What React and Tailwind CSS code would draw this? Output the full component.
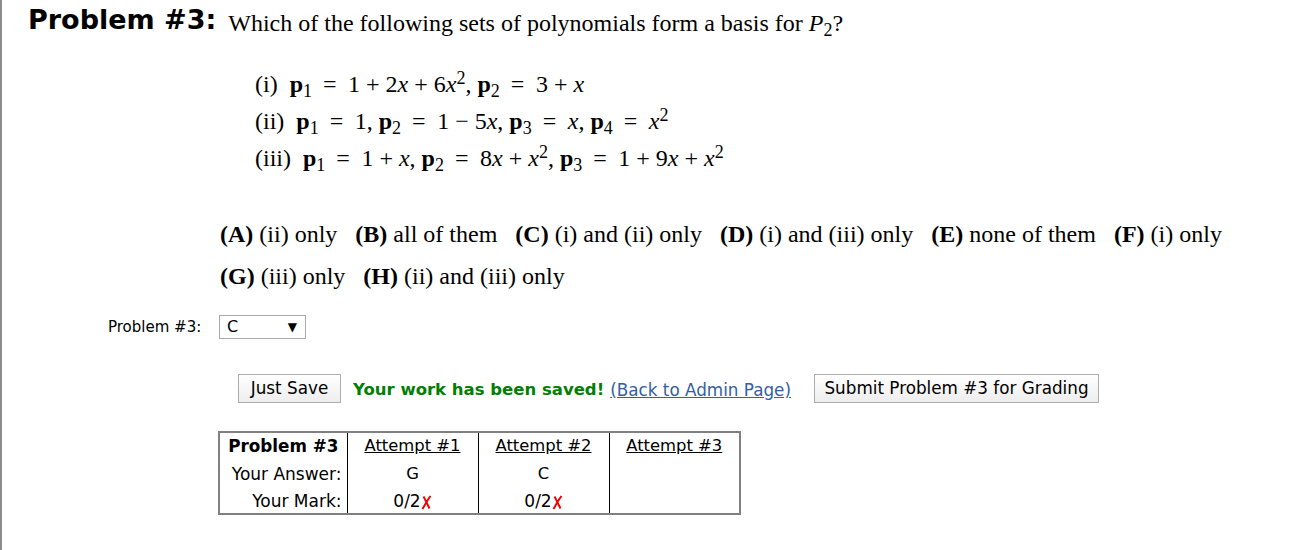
import React from 'react';

const SERIF = "font-['Liberation_Serif','Times_New_Roman',serif]";
const SANS = "font-['DejaVu_Sans',Verdana,sans-serif]";

function Bold({ children }) {
  return <b className="font-bold not-italic">{children}</b>;
}

function Sub({ children }) {
  return <sub className="text-[18px] relative top-[5px] align-baseline">{children}</sub>;
}

function Sup({ children }) {
  return <sup className="text-[18px] relative -top-[8px] align-baseline">{children}</sup>;
}

function Vec({ n }) {
  return (
    <span>
      <Bold>p</Bold>
      <Sub>{n}</Sub>
    </span>
  );
}

function X() {
  return <i>x</i>;
}

function Eq() {
  return <span className="ml-[5px] mr-[5.5px]">=</span>;
}

function Choice({ letter, children, last }) {
  return (
    <span className={last ? '' : 'mr-[18px]'}>
      <Bold>({letter})</Bold> {children}
    </span>
  );
}

function Cross() {
  return (
    <svg width="11" height="15" viewBox="0 0 11 15" className="inline-block align-[-3px]">
      <path d="M2.5 1.5 C4.5 5 6.5 9.5 8.5 13.5 M9.5 1 C6.5 5 4 9.5 1.5 14" fill="none" stroke="#f00000" strokeWidth="2" />
    </svg>
  );
}

const attempts = [
  { title: 'Attempt #1', answer: 'G', mark: true },
  { title: 'Attempt #2', answer: 'C', mark: true },
  { title: 'Attempt #3', answer: '', mark: false },
];

export default function App() {
  return (
    <div className={`min-h-[550px] bg-white border-l-2 border-[#8c8c8c] text-black ${SANS}`}>
      <div className="flex items-start pl-[26px] pt-[2px] h-[66px]">
        <h1 className={`text-[27px] leading-[36px] font-bold ${SANS}`}>Problem #3:</h1>
        <p className={`ml-[12px] mt-[3px] text-[24px] leading-[36px] ${SERIF}`}>
          Which of the following sets of polynomials form a basis for <i>P</i>
          <Sub>2</Sub>?
        </p>
      </div>

      <div className={`ml-[253px] text-[24px] leading-[37px] whitespace-nowrap ${SERIF}`}>
        <div>
          (i)&nbsp; <Vec n="1" /> <Eq /> 1 + 2<X /> + 6<X />
          <Sup>2</Sup>, <Vec n="2" /> <Eq /> 3 + <X />
        </div>
        <div>
          (ii)&nbsp; <Vec n="1" /> <Eq /> 1, <Vec n="2" /> <Eq /> 1 − 5<X />, <Vec n="3" /> <Eq /> <X />, <Vec n="4" /> <Eq /> <X />
          <Sup>2</Sup>
        </div>
        <div>
          (iii)&nbsp; <Vec n="1" /> <Eq /> 1 + <X />, <Vec n="2" /> <Eq /> 8<X /> + <X />
          <Sup>2</Sup>, <Vec n="3" /> <Eq /> 1 + 9<X /> + <X />
          <Sup>2</Sup>
        </div>
      </div>

      <div className={`ml-[218px] mt-[36px] text-[24px] leading-[42px] whitespace-nowrap ${SERIF}`}>
        <div>
          <Choice letter="A">(ii) only</Choice>
          <Choice letter="B">all of them</Choice>
          <Choice letter="C">(i) and (ii) only</Choice>
          <Choice letter="D">(i) and (iii) only</Choice>
          <Choice letter="E">none of them</Choice>
          <Choice letter="F" last>(i) only</Choice>
        </div>
        <div>
          <Choice letter="G">(iii) only</Choice>
          <Choice letter="H" last>(ii) and (iii) only</Choice>
        </div>
      </div>

      <div className="flex items-center mt-[18px] h-[24px]">
        <label className="ml-[106px] w-[111px] text-[15px]">Problem #3:</label>
        <div className="flex items-center justify-between w-[87px] h-[24px] border border-[#a9a9a9] pl-[7px] pr-[8px] text-[16px]">
          <span>C</span>
          <span className="text-[12px]">▼</span>
        </div>
      </div>

      <div className="flex items-center ml-[236px] mt-[35px] h-[29px] whitespace-nowrap text-[16.8px]">
        <button className="h-[29px] w-[103px] border border-[#adadad] bg-gradient-to-b from-white to-[#ededed]">
          Just Save
        </button>
        <span className="ml-[12px] pt-[4px] text-[16.5px] font-bold text-[#007f00]">Your work has been saved!</span>
        <a href="#" className="ml-[6px] pt-[4px] text-[#33609f] underline">(Back to Admin Page)</a>
        <button className="ml-[23px] h-[29px] w-[285px] border border-[#adadad] bg-gradient-to-b from-white to-[#ededed]">
          Submit Problem #3 for Grading
        </button>
      </div>

      <table className="ml-[216px] mt-[28px] w-[522px] border-2 border-[#808080] border-collapse text-[16.4px] leading-[24px] table-fixed">
        <colgroup>
          <col className="w-[128px]" />
          <col className="w-[131px]" />
          <col className="w-[131px]" />
          <col className="w-[131px]" />
        </colgroup>
        <tbody>
          <tr className="h-[27px]">
            <th className="pr-[8px] text-right text-[16.8px] font-bold">Problem #3</th>
            {attempts.map((a) => (
              <td key={a.title} className="border-l border-black text-center underline">{a.title}</td>
            ))}
          </tr>
          <tr className="h-[28px]">
            <td className="pr-[5px] pt-[1px] text-right text-[17px]">Your Answer:</td>
            {attempts.map((a) => (
              <td key={a.title} className="border-l border-black pt-[1px] text-center">{a.answer}</td>
            ))}
          </tr>
          <tr className="h-[27px]">
            <td className="pr-[5px] pt-[2px] text-right text-[17px]">Your Mark:</td>
            {attempts.map((a) => (
              <td key={a.title} className="border-l border-black pt-[2px] text-center text-[17px]">
                {a.mark && (
                  <span>
                    0/2
                    <Cross />
                  </span>
                )}
              </td>
            ))}
          </tr>
        </tbody>
      </table>
    </div>
  );
}
